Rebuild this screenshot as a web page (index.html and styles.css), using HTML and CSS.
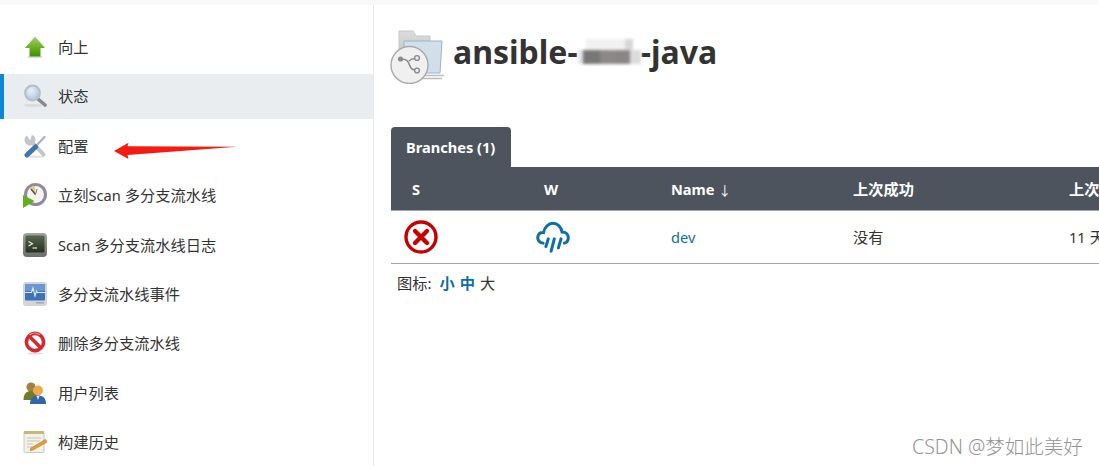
FILE: index.html
```html
<!DOCTYPE html>
<html lang="zh">
<head>
<meta charset="utf-8">
<title>ansible-java</title>
<link rel="stylesheet" href="styles.css">
</head>
<body>
<div class="topstrip"></div>
<div class="app">
  <nav class="sidebar">
    <a class="task">
      <svg class="ti" viewBox="0 0 24 24"><defs><linearGradient id="gu" x1="0" y1="0" x2="0" y2="1"><stop offset="0" stop-color="#a5cf7c"/><stop offset=".55" stop-color="#6bb01e"/><stop offset="1" stop-color="#3f8f0c"/></linearGradient></defs><ellipse cx="12" cy="22" rx="8" ry="1.4" fill="#ddd"/><path d="M12 1.5 L22 13 H17.5 V21.5 H6.5 V13 H2 Z" fill="url(#gu)"/></svg>
      <span>向上</span>
    </a>
    <a class="task active">
      <svg class="ti" viewBox="0 0 24 24"><defs><radialGradient id="gm" cx=".4" cy=".35" r=".7"><stop offset="0" stop-color="#e9f1fa"/><stop offset="1" stop-color="#a6c3e3"/></radialGradient></defs><ellipse cx="10" cy="21.5" rx="9" ry="1.6" fill="#d9dcde"/><path d="M15 15 L22 21" stroke="#85898d" stroke-width="3.6" stroke-linecap="round"/><circle cx="9.5" cy="9" r="7.4" fill="url(#gm)" stroke="#b9bdc2" stroke-width="2"/></svg>
      <span>状态</span>
    </a>
    <a class="task">
      <svg class="ti" viewBox="0 0 24 24"><ellipse cx="12" cy="22.6" rx="10" ry="1.2" fill="#e2e2e2"/><path d="M7 6 L20.5 20.5" stroke="#c2c6ca" stroke-width="4" stroke-linecap="round"/><circle cx="7" cy="6" r="5.5" fill="#c2c6ca"/><path d="M7 6.5 L2.5 -1 L9.5 -1 Z" fill="#fff"/><path d="M21.5 3 L11.5 13.5" stroke="#aeb3b8" stroke-width="2.2" stroke-linecap="round"/><path d="M12.5 13 L4 21" stroke="#3f74ad" stroke-width="5" stroke-linecap="round"/></svg>
      <span>配置</span>
    </a>
    <a class="task">
      <svg class="ti" viewBox="0 0 24 24"><circle cx="12.5" cy="11.5" r="11.5" fill="#8f8aa0"/><circle cx="12.5" cy="11.5" r="8.5" fill="#f6f4ee"/><path d="M12.5 11.5 L6.5 5 A8.5 8.5 0 0 1 12 3 Z" fill="#e8cf80"/><path d="M12.5 11.5 L8 6" stroke="#555" stroke-width="1.6"/><path d="M12.5 11.5 L14 6" stroke="#777" stroke-width="1"/><path d="M0 12 L11.5 18 L0 25 Z" fill="#62b01c"/></svg>
      <span>立刻<span class="lat">Scan</span> 多分支流水线</span>
    </a>
    <a class="task">
      <svg class="ti" viewBox="0 0 24 24"><defs><linearGradient id="gt" x1="0" y1="0" x2="0" y2="1"><stop offset="0" stop-color="#a2a59e"/><stop offset="1" stop-color="#6c6f69"/></linearGradient><linearGradient id="gs" x1="0" y1="0" x2="0" y2="1"><stop offset="0" stop-color="#5a6650"/><stop offset="1" stop-color="#26301f"/></linearGradient></defs><rect width="24" height="24" rx="4" fill="url(#gt)"/><rect x="2.5" y="2.5" width="19" height="17" rx="1.5" fill="url(#gs)"/><path d="M5.5 8.5 L9.5 10.7 L5.5 13" stroke="#e4e8e0" stroke-width="1.2" fill="none"/><path d="M9.5 15 H14" stroke="#e4e8e0" stroke-width="1.2"/></svg>
      <span><span class="lat">Scan</span> 多分支流水线日志</span>
    </a>
    <a class="task">
      <svg class="ti" viewBox="0 0 24 24"><rect width="24" height="24" rx="3" fill="#d3d5d6"/><rect x="2" y="2" width="20" height="16.5" rx="1" fill="#3c72b8"/><rect x="2" y="2" width="20" height="7" fill="#6a97d3"/><path d="M2 10.5 H8.5 L10 6 L12 14 L13.5 9 L14.5 10.5 H22" stroke="#e6f0fb" stroke-width="1.1" fill="none"/><rect x="13" y="20" width="8" height="1.6" fill="#a9acae"/></svg>
      <span>多分支流水线事件</span>
    </a>
    <a class="task">
      <svg class="ti" viewBox="0 0 24 24"><ellipse cx="12" cy="22.5" rx="8" ry="1.2" fill="#e2dede"/><circle cx="12" cy="11" r="8.6" fill="#fff" stroke="#d42a2f" stroke-width="3.6"/><path d="M6 5 L18 17" stroke="#d42a2f" stroke-width="3.6"/><path d="M6.5 3.8 A8.6 8.6 0 0 1 17 3.8" stroke="#ee8c8c" stroke-width="1.2" fill="none"/></svg>
      <span>删除多分支流水线</span>
    </a>
    <a class="task">
      <svg class="ti" viewBox="0 0 24 24"><circle cx="8" cy="6" r="4.6" fill="#a5803d"/><path d="M0.5 19 C0.5 12 4 10 8 10 C12 10 14 12 14 19 Z" fill="#6f7d2b"/><circle cx="15" cy="9.5" r="5" fill="#eeaa4e"/><path d="M7 23 C7 16.5 11 14.5 15 14.5 C19.5 14.5 23 16.5 23 23 Z" fill="#2f66a3"/><path d="M13.5 15 L15 19 L16.5 15 Z" fill="#dfe7ef"/></svg>
      <span>用户列表</span>
    </a>
    <a class="task">
      <svg class="ti" viewBox="0 0 24 24"><rect x="1" y="1.5" width="20" height="21" rx="1.5" fill="#f4f2e8" stroke="#c9c8be" stroke-width="1"/><rect x="1" y="1" width="20" height="3" fill="#c2bb78"/><path d="M4 8 H18 M4 11 H17 M4 14 H10 M4 17 H9" stroke="#c5c5be" stroke-width="1"/><path d="M8 18 L22.5 9.5 L24 12 L10 20 L7 20.5 Z" fill="#e3a23a" stroke="#a8701e" stroke-width=".6"/></svg>
      <span>构建历史</span>
    </a>
  </nav>

  <main class="main">
    <header class="title-row">
      <svg class="job-icon" viewBox="0 0 54 54">
        <defs><linearGradient id="gf" x1="0" y1="0" x2="0" y2="1"><stop offset="0" stop-color="#dcdcdc"/><stop offset="1" stop-color="#bdbdbd"/></linearGradient></defs>
        <path d="M9 1 H23 L26 6 H40 V36 H9 Z" fill="url(#gf)" stroke="#c8c8c8"/>
        <path d="M14 11 H52 L50 43 H14 Z" fill="#d3deeb" stroke="#9cb2cf"/>
        <path d="M30 45.5 H54 M30 48.5 H52" stroke="#bdbdbd" stroke-width="1.5"/>
        <circle cx="19.5" cy="35" r="18.5" fill="#f0f0f0" stroke="#a9a9a9" stroke-width="1.4"/>
        <g stroke="#8a8a8a" stroke-width="1.6" fill="none"><path d="M11 29 C17 29 18 31 19.5 35 C21 39 23 40 25 40"/><path d="M19 31 C21 29 23 28.5 25 28.5"/></g>
        <circle cx="10.5" cy="29" r="2.6" fill="#8a8a8a"/><circle cx="27" cy="28" r="2.4" fill="#f0f0f0" stroke="#8a8a8a" stroke-width="1.4"/><circle cx="27" cy="40.5" r="2.4" fill="#f0f0f0" stroke="#8a8a8a" stroke-width="1.4"/>
      </svg>
      <h1 class="title">ansible-<span class="redact"></span>-java</h1>
    </header>

    <div class="tab lat">Branches (1)</div>
    <table class="jobs">
      <colgroup><col class="c1"><col class="c2"><col class="c3"><col class="c4"><col class="c5"></colgroup>
      <thead>
        <tr><th class="lat">S</th><th class="lat">W</th><th class="lat">Name <span class="sort">↓</span></th><th>上次成功</th><th>上次失败</th></tr>
      </thead>
      <tbody>
        <tr>
          <td class="ic">
            <svg class="status" viewBox="0 0 34 34"><circle cx="17" cy="17" r="15" fill="none" stroke="#c80000" stroke-width="3.4"/><path d="M11 11 L23 23 M23 11 L11 23" stroke="#c80000" stroke-width="4.4" stroke-linecap="round"/></svg>
          </td>
          <td class="ic">
            <svg class="status" viewBox="0 0 36 34"><path d="M7.5 23.5 C3 22.5 1.5 19.5 2 16.5 C2.6 13.5 5.2 12 8 12.2 C9 7 13 2.5 18 2.5 C23 2.5 26.8 6.5 27.6 11.6 C31.5 11.6 34.2 14.2 34.2 17.8 C34.2 20.8 32.5 22.8 30 23.5" fill="none" stroke="#0f6ea6" stroke-width="3.2" stroke-linecap="round"/><path d="M13 19 L10.5 27 M19.4 19 L16 32 M26.5 19 L23.7 28.5" stroke="#0f6ea6" stroke-width="3.2" stroke-linecap="round"/></svg>
          </td>
          <td><a class="link lat">dev</a></td>
          <td>没有</td>
          <td><span class="lat">11</span> 天 2 小时 - #1</td>
        </tr>
      </tbody>
    </table>
    <div class="legend">图标:<a class="size sel">小</a><a class="size sel">中</a><a class="size">大</a></div>
  </main>
</div>

<svg class="red-arrow" viewBox="0 0 124 18"><path d="M0 9 L14.5 0.8 L13.5 4.2 L123 4.8 L13.5 13 L14.5 17 Z" fill="#f51a10"/></svg>
<div class="watermark">CSDN @梦如此美好</div>
</body>
</html>
```
FILE: styles.css
```css
* { box-sizing: border-box; }
html, body { margin: 0; height: 100%; }
body {
  position: relative;
  width: 1099px;
  height: 466px;
  overflow: hidden;
  background: #fff;
  color: #333;
  font: 15.25px/20px "Noto Sans", "Noto Sans CJK SC", sans-serif;
}
.lat { font-size: 14.6px; }
.topstrip { height: 5px; background: #f8f8f8; }
.app { display: flex; height: 461px; }

.sidebar {
  flex: 0 0 374px;
  padding-top: 19.5px;
  border-right: 1px solid #e8e9ea;
  display: flex;
  flex-direction: column;
  gap: 4.4px;
}
.task {
  display: flex;
  align-items: center;
  gap: 11px;
  height: 45px;
  padding-left: 23px;
  color: #333;
  flex: none;
}
.task.active {
  background: #e9edf0;
  box-shadow: inset 4px 0 0 #0b87d6;
}
.ti { width: 24px; height: 24px; flex: none; overflow: visible; filter: blur(.3px); }

.main { flex: 1; min-width: 0; overflow: hidden; padding-left: 17px; }
.title-row { display: flex; align-items: center; gap: 9px; height: 54px; margin-top: 25px; margin-left: -1px; }
.job-icon { width: 54px; height: 54px; flex: none; filter: blur(.3px); }
.title {
  margin: 0 0 10px;
  font-size: 32px;
  line-height: 40px;
  font-weight: 700;
  color: #333;
  white-space: nowrap;
}
.redact {
  display: inline-block;
  width: 63px;
  height: 25px;
  vertical-align: 0;
  filter: blur(1.5px);
  background:
    linear-gradient(90deg, #e4e4e4 0 8%, #777 8% 35%, #8c8888 35% 58%, #8a8686 58% 82%, #dcdcdc 82% 100%) bottom / 100% 58% no-repeat,
    linear-gradient(90deg, #fff 0 12%, #f1f1f1 12% 75%, #d6d6d6 75% 88%, #fff 88% 100%) top / 100% 42% no-repeat;
}

.tab {
  width: 120px;
  height: 40px;
  margin-top: 43px;
  padding-left: 15px;
  background: #4d545d;
  color: #fff;
  border-radius: 4px 4px 0 0;
  font-weight: 700;
  line-height: 41px;
}
.jobs {
  width: 800px;
  table-layout: fixed;
  border-collapse: collapse;
}
.c1 { width: 132px; }
.c2 { width: 127px; }
.c3 { width: 182px; }
.c4 { width: 216px; }
.c5 { width: 143px; }
.jobs th {
  height: 43px;
  padding: 2px 0 0 21px;
  text-align: left;
  background: #4d545d;
  color: #fff;
  font-weight: 700;
  white-space: nowrap;
  border-bottom: 1px solid #a0a5ad;
}
.sort { font-size: 13px; font-weight: 400; }
.jobs td {
  height: 53px;
  padding: 0 0 0 21px;
  white-space: nowrap;
  border-bottom: 1px solid #a0a5ad;
}
.jobs td.ic { padding-left: 13px; }
.status { display: block; width: 34px; height: 34px; }
.link { color: #0f6ea6; }

.legend { display: flex; align-items: center; padding: 9px 0 0 6px; color: #333; }
.size { margin-left: 5px; color: #333; }
.size:first-of-type { margin-left: 8px; }
.size.sel { color: #0f6ea6; font-weight: 700; }

.red-arrow { position: absolute; left: 114px; top: 142px; width: 124px; height: 18px; }
.watermark {
  position: absolute;
  left: 912px;
  top: 435px;
  color: #949494;
  font-size: 19.5px;
  font-weight: 300;
  line-height: 24px;
  white-space: nowrap;
}
```
